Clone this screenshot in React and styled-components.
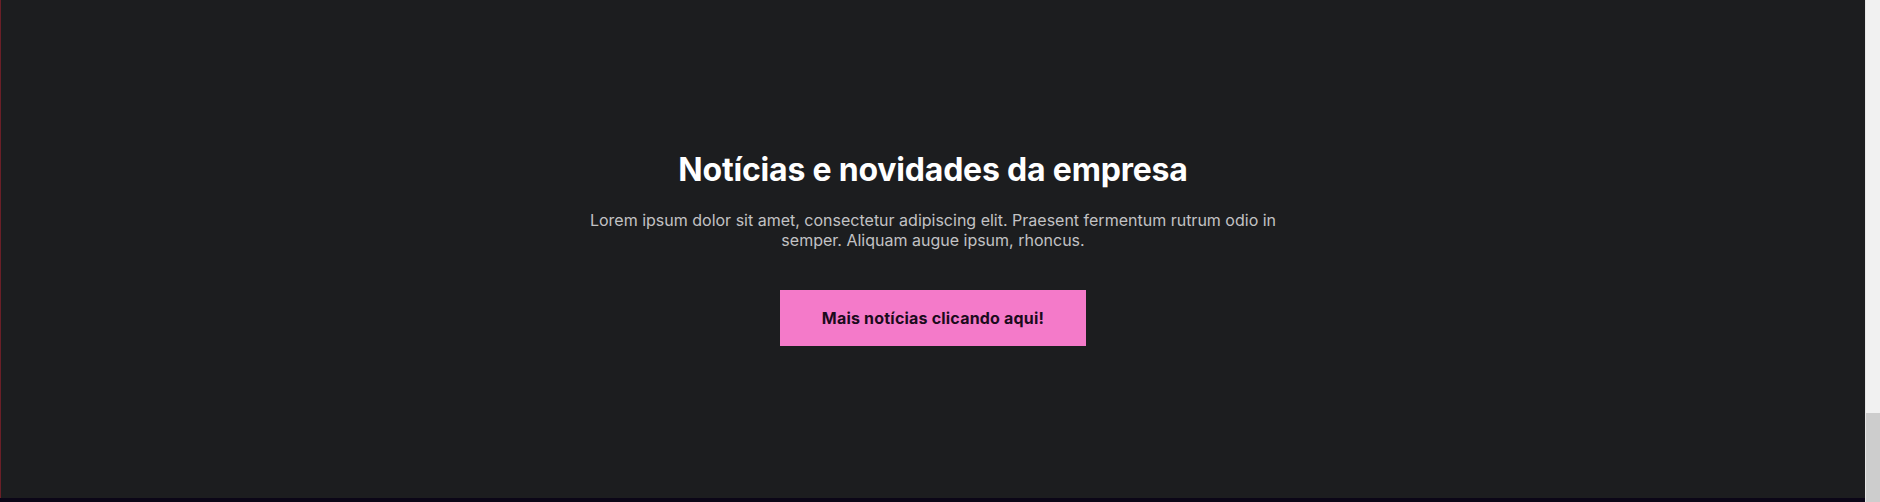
import React from "react";
import styled, { createGlobalStyle } from "styled-components";

const Global = createGlobalStyle`
  html, body { margin: 0; padding: 0; height: 100%; overflow: hidden; }
  body { background: #1c1d1f; font-family: Inter, "Noto Sans", sans-serif; }
  #root { height: 100%; }
`;

const Frame = styled.div`
  display: flex;
  height: 502px;
  width: 100%;
`;

const Main = styled.div`
  flex: 1;
  display: flex;
  flex-direction: column;
  min-width: 0;
`;

const Section = styled.section`
  flex: 1;
  background: #1c1d1f;
  border-left: 1px solid #6a1f27;
  display: flex;
  flex-direction: column;
  align-items: center;
  padding-top: 151px;
  box-sizing: border-box;
`;

const Heading = styled.h2`
  margin: 0;
  font-family: Inter, sans-serif;
  font-weight: 700;
  font-size: 32px;
  line-height: 38px;
  letter-spacing: -0.2px;
  color: #ffffff;
  text-align: center;
`;

const Lead = styled.p`
  margin: 21px 0 0;
  max-width: 720px;
  font-family: Inter, sans-serif;
  font-size: 16px;
  line-height: 20px;
  color: #c2c2c4;
  text-align: center;
`;

const Cta = styled.a`
  margin-top: 40px;
  display: flex;
  align-items: center;
  justify-content: center;
  width: 306px;
  height: 56px;
  background: #f47ac9;
  color: #1b0b1c;
  font-family: Inter, sans-serif;
  font-weight: 700;
  font-size: 16px;
  letter-spacing: 0.2px;
  text-decoration: none;
  cursor: pointer;
`;

const BottomEdge = styled.div`
  height: 4px;
  background: #0b0617;
`;

const ScrollTrack = styled.div`
  width: 15px;
  background: #f1f1f1;
  border-left: 1px solid #e6e6e6;
  box-sizing: border-box;
  display: flex;
  flex-direction: column;
  justify-content: flex-end;
`;

const ScrollThumb = styled.div`
  height: 89px;
  background: #cdcdcd;
`;

export default function App() {
  return (
    <>
      <Global />
      <Frame>
        <Main>
          <Section>
            <Heading>Notícias e novidades da empresa</Heading>
            <Lead>
              Lorem ipsum dolor sit amet, consectetur adipiscing elit. Praesent fermentum rutrum odio in
              semper. Aliquam augue ipsum, rhoncus.
            </Lead>
            <Cta href="#">Mais notícias clicando aqui!</Cta>
          </Section>
          <BottomEdge />
        </Main>
        <ScrollTrack>
          <ScrollThumb />
        </ScrollTrack>
      </Frame>
    </>
  );
}
